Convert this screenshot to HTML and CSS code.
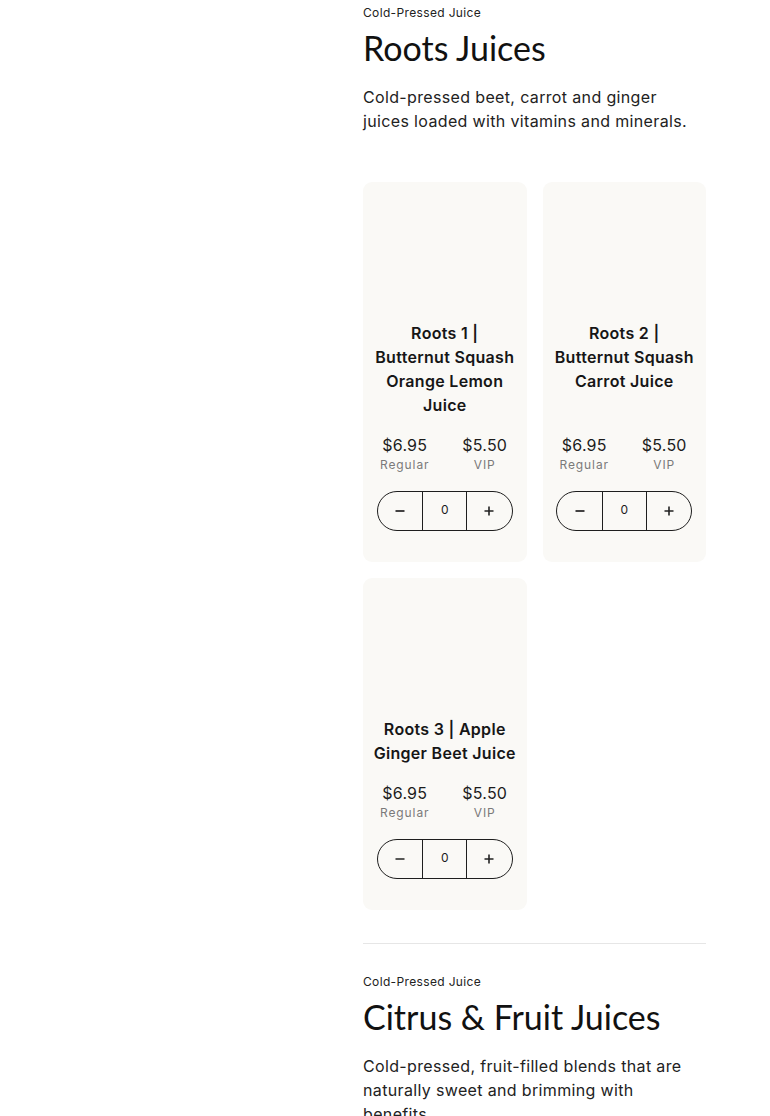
FILE: index.html
```html
<!DOCTYPE html>
<html lang="en">
<head>
<meta charset="utf-8">
<title>Cold-Pressed Juice</title>
<link rel="stylesheet" href="styles.css">
</head>
<body>
<div class="page">
  <aside class="sidebar"></aside>
  <main class="content">
    <section class="category">
      <p class="eyebrow">Cold-Pressed Juice</p>
      <h2 class="cat-title">Roots Juices</h2>
      <p class="cat-desc">Cold-pressed beet, carrot and ginger juices loaded with vitamins and minerals.</p>
      <div class="grid">
        <article class="card">
          <div class="thumb"></div>
          <h3 class="name">Roots 1 | Butternut Squash Orange Lemon Juice</h3>
          <div class="prices">
            <div class="price"><span class="amt">$6.95</span><span class="lbl">Regular</span></div>
            <div class="price"><span class="amt">$5.50</span><span class="lbl">VIP</span></div>
          </div>
          <div class="stepper">
            <button class="step"><svg viewBox="0 0 12 12" width="12" height="12"><path d="M1.5 6h9" stroke="#222" stroke-width="1.7"/></svg></button>
            <span class="qty">0</span>
            <button class="step"><svg viewBox="0 0 12 12" width="12" height="12"><path d="M1.5 6h9M6 1.5v9" stroke="#222" stroke-width="1.6"/></svg></button>
          </div>
        </article>
        <article class="card">
          <div class="thumb"></div>
          <h3 class="name">Roots 2 | Butternut Squash Carrot Juice</h3>
          <div class="prices">
            <div class="price"><span class="amt">$6.95</span><span class="lbl">Regular</span></div>
            <div class="price"><span class="amt">$5.50</span><span class="lbl">VIP</span></div>
          </div>
          <div class="stepper">
            <button class="step"><svg viewBox="0 0 12 12" width="12" height="12"><path d="M1.5 6h9" stroke="#222" stroke-width="1.7"/></svg></button>
            <span class="qty">0</span>
            <button class="step"><svg viewBox="0 0 12 12" width="12" height="12"><path d="M1.5 6h9M6 1.5v9" stroke="#222" stroke-width="1.6"/></svg></button>
          </div>
        </article>
        <article class="card">
          <div class="thumb"></div>
          <h3 class="name">Roots 3 | Apple Ginger Beet Juice</h3>
          <div class="prices">
            <div class="price"><span class="amt">$6.95</span><span class="lbl">Regular</span></div>
            <div class="price"><span class="amt">$5.50</span><span class="lbl">VIP</span></div>
          </div>
          <div class="stepper">
            <button class="step"><svg viewBox="0 0 12 12" width="12" height="12"><path d="M1.5 6h9" stroke="#222" stroke-width="1.7"/></svg></button>
            <span class="qty">0</span>
            <button class="step"><svg viewBox="0 0 12 12" width="12" height="12"><path d="M1.5 6h9M6 1.5v9" stroke="#222" stroke-width="1.6"/></svg></button>
          </div>
        </article>
      </div>
    </section>
    <hr class="divider">
    <section class="category">
      <p class="eyebrow">Cold-Pressed Juice</p>
      <h2 class="cat-title">Citrus &amp; Fruit Juices</h2>
      <p class="cat-desc">Cold-pressed, fruit-filled blends that are naturally sweet and brimming with benefits.</p>
    </section>
  </main>
</div>
</body>
</html>
```
FILE: styles.css
```css
* { box-sizing: border-box; }
html, body { margin: 0; padding: 0; background: #fff; }
body {
  font-family: Inter, "Liberation Sans", sans-serif;
  color: #1c1c1c;
  overflow: hidden;
}
.page {
  display: grid;
  grid-template-columns: 363px 343px;
  padding-top: 5px;
}
.content { min-width: 0; }
.eyebrow {
  margin: 0;
  font-size: 12px;
  line-height: 16px;
  letter-spacing: 0.35px;
  color: #222;
}
.cat-title {
  margin: 7px 0 0;
  font-family: Lato, Inter, sans-serif;
  font-size: 34px;
  line-height: 40px;
  font-weight: 400;
  letter-spacing: 0;
  color: #111;
}
.cat-desc {
  margin: 17px 0 0;
  max-width: 332px;
  font-size: 16px;
  line-height: 24px;
  letter-spacing: 0.35px;
  color: #222;
}
.grid {
  margin-top: 49px;
  display: grid;
  grid-template-columns: minmax(0, 1fr) minmax(0, 1fr);
  gap: 16px;
}
.card {
  background: #faf9f6;
  border-radius: 9px;
  padding: 16px 10px 31px;
  display: flex;
  flex-direction: column;
  align-items: center;
}
.thumb { height: 123px; width: 100%; }
.name {
  margin: 0;
  font-size: 16px;
  line-height: 24px;
  font-weight: 600;
  letter-spacing: 0.3px;
  text-align: center;
  color: #161616;
}
.prices {
  margin-top: auto;
  padding-top: 18px;
  display: grid;
  grid-template-columns: 56px 56px;
  column-gap: 24px;
}
.price { display: flex; flex-direction: column; align-items: center; }
.amt { font-size: 16px; line-height: 20px; letter-spacing: 0.2px; color: #1c1c1c; }
.lbl { margin-top: 1px; font-size: 12px; line-height: 18px; letter-spacing: 0.9px; color: #7a7a7a; }
.stepper {
  margin-top: 17px;
  width: 136px;
  height: 40px;
  border: 1px solid #1e1e1e;
  border-radius: 20px;
  display: grid;
  grid-template-columns: 1fr 1fr 1fr;
  overflow: hidden;
}
.step {
  border: 0;
  background: transparent;
  padding: 0;
  display: flex;
  align-items: center;
  justify-content: center;
}
.qty {
  border-left: 1px solid #1e1e1e;
  border-right: 1px solid #1e1e1e;
  display: flex;
  align-items: center;
  justify-content: center;
  font-size: 12px;
  padding-bottom: 3px;
  color: #1c1c1c;
}
.divider {
  margin: 33px 0 0;
  border: 0;
  border-top: 1px solid #e6e6e6;
}
.category + .divider + .category { padding-top: 30px; }
```
